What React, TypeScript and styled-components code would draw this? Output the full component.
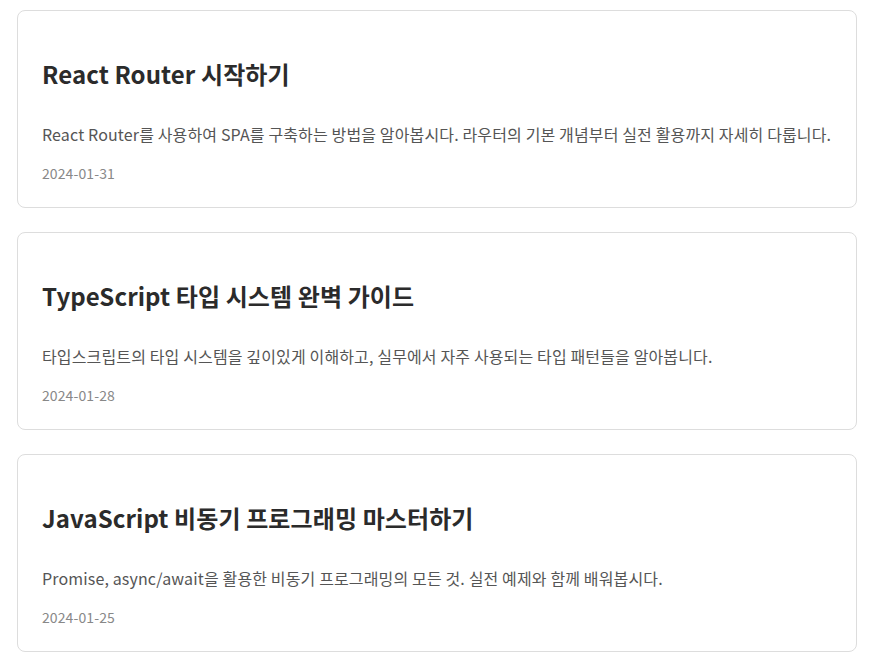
import React from "react";
import styled, { createGlobalStyle } from "styled-components";

const Global = createGlobalStyle`
  * { box-sizing: border-box; }
  body {
    margin: 0;
    background: #ffffff;
    font-family: "Noto Sans CJK KR", "Noto Sans", sans-serif;
  }
`;

const List = styled.div`
  display: flex;
  flex-direction: column;
  gap: 24px;
  padding: 10px 19px 10px 17px;
`;

const Card = styled.article`
  border: 1px solid #dddddd;
  border-radius: 8px;
  padding: 24px;
  background: #fff;
  display: flex;
  flex-direction: column;
`;

const Title = styled.h2`
  margin: 21px 0 30px;
  font-size: 24px;
  line-height: 36px;
  font-weight: 700;
  letter-spacing: 0.1px;
  color: #2b2b2b;
`;

const Desc = styled.p`
  margin: 0 -4px 17px 0;
  font-size: 16px;
  line-height: 24px;
  letter-spacing: 0.14px;
  color: #555555;
`;

const DateText = styled.span`
  font-size: 14px;
  line-height: 20px;
  letter-spacing: 0.1px;
  color: #888888;
`;

const posts = [
  {
    title: "React Router 시작하기",
    desc: "React Router를 사용하여 SPA를 구축하는 방법을 알아봅시다. 라우터의 기본 개념부터 실전 활용까지 자세히 다룹니다.",
    date: "2024-01-31",
  },
  {
    title: "TypeScript 타입 시스템 완벽 가이드",
    desc: "타입스크립트의 타입 시스템을 깊이있게 이해하고, 실무에서 자주 사용되는 타입 패턴들을 알아봅니다.",
    date: "2024-01-28",
  },
  {
    title: "JavaScript 비동기 프로그래밍 마스터하기",
    desc: "Promise, async/await을 활용한 비동기 프로그래밍의 모든 것. 실전 예제와 함께 배워봅시다.",
    date: "2024-01-25",
  },
];

export default function App() {
  return (
    <>
      <Global />
      <List>
        {posts.map((p) => (
          <Card key={p.date}>
            <Title>{p.title}</Title>
            <Desc>{p.desc}</Desc>
            <DateText>{p.date}</DateText>
          </Card>
        ))}
      </List>
    </>
  );
}
